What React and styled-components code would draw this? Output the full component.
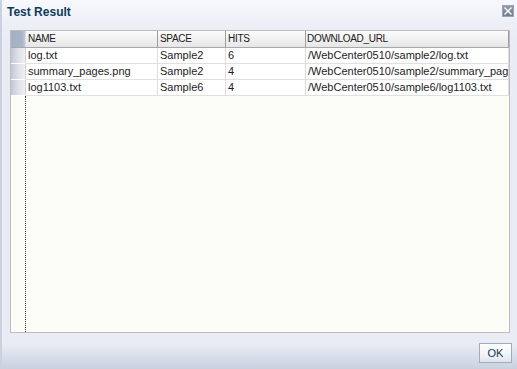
import React from "react";
import styled, { createGlobalStyle } from "styled-components";

const Global = createGlobalStyle`
  html, body { margin: 0; padding: 0; width: 517px; height: 369px; overflow: hidden; }
  body { font-family: "Liberation Sans", Arial, sans-serif; }
  * { box-sizing: border-box; }
`;

const Dialog = styled.div`
  width: 517px;
  height: 369px;
  display: flex;
  flex-direction: column;
  border-left: 2px solid #cbd1de;
  background: linear-gradient(
    to bottom,
    #f8f9fc 0px,
    #eceff6 24px,
    #e9ecf5 40px,
    #e9ecf5 344px,
    #c9d1df 369px
  );
`;

const TitleBar = styled.div`
  height: 30px;
  flex: none;
  display: flex;
  justify-content: space-between;
  align-items: flex-start;
  padding: 5px 3px 0 5px;
`;

const Title = styled.div`
  font-size: 12px;
  line-height: 14px;
  font-weight: bold;
  color: #0f3b5b;
`;

const CloseButton = styled.button`
  width: 12px;
  height: 12px;
  padding: 0;
  border: 1px solid #9aa5b8;
  background: linear-gradient(to bottom, #8c98ad, #6f7d95);
  display: flex;
  align-items: center;
  justify-content: center;
  cursor: pointer;
`;

const TableBox = styled.div`
  margin-left: 8px;
  width: 500px;
  height: 303px;
  flex: none;
  border: 1px solid #bcbcbc;
  background: #fcfdf6;
  display: flex;
  flex-direction: column;
  font-size: 11px;
  color: #1c1c1c;
`;

const COLS = "15px 132px 68px 80px 203px";

const HeaderRow = styled.div`
  display: grid;
  grid-template-columns: ${COLS};
  height: 17px;
  flex: none;
  background: linear-gradient(to bottom, #fcfcfc, #e6e6e6);
  border-bottom: 1px solid #a8a8a8;
`;

const HeaderCell = styled.div`
  border-right: 1px solid #9c9c9c;
  padding-left: ${(p) => p.$pad ?? 2}px;
  font-size: 10px;
  letter-spacing: -0.3px;
  line-height: 16px;
  color: #202020;
  white-space: nowrap;
  overflow: hidden;
`;

const CornerCell = styled.div`
  background: linear-gradient(to right, #a3b0c4 0, #a8b4c7 80%, #c3cbd8 100%);
  border-right: 1px solid #d8dde6;
`;

const Row = styled.div`
  display: grid;
  grid-template-columns: ${COLS};
  height: 16px;
  flex: none;
`;

const RowHead = styled.div`
  background: linear-gradient(to right, #c3c8d4 0, #dde0e8 50%, #eff0f4 100%);
  border-bottom: 1px solid #ffffff;
  border-right: 1px solid #d2d2d2;
`;

const Cell = styled.div`
  background: #ffffff;
  border-right: 1px solid #dcdcdc;
  border-bottom: 1px solid #e0e0e0;
  padding-left: 2px;
  line-height: 15px;
  white-space: nowrap;
  overflow: hidden;
`;

const Filler = styled.div`
  flex: 1;
  display: grid;
  grid-template-columns: 15px 1fr;
`;

const DottedGuide = styled.div`
  border-right: 1px dotted #3a3a3a;
`;

const Footer = styled.div`
  flex: none;
  display: flex;
  justify-content: flex-end;
  padding: 10px 5px 0 0;
`;

const OkButton = styled.button`
  width: 33px;
  height: 20px;
  padding: 0;
  border: 1px solid #a3abb9;
  background: linear-gradient(to bottom, #ffffff 0, #f3f5f9 50%, #dfe4ee 100%);
  color: #0f3b5b;
  font-family: "Liberation Sans", Arial, sans-serif;
  font-size: 11px;
  line-height: 18px;
  cursor: pointer;
`;

const rows = [
  ["log.txt", "Sample2", "6", "/WebCenter0510/sample2/log.txt"],
  ["summary_pages.png", "Sample2", "4", "/WebCenter0510/sample2/summary_pages.png"],
  ["log1103.txt", "Sample6", "4", "/WebCenter0510/sample6/log1103.txt"],
];

export default function App() {
  return (
    <>
      <Global />
      <Dialog>
        <TitleBar>
          <Title>Test Result</Title>
          <CloseButton aria-label="Close">
            <svg width="8" height="8" viewBox="0 0 8 8">
              <path d="M0.5 0.5 L7.5 7.5 M7.5 0.5 L0.5 7.5" stroke="#ffffff" strokeWidth="1.4" />
            </svg>
          </CloseButton>
        </TitleBar>
        <TableBox>
          <HeaderRow>
            <CornerCell />
            <HeaderCell>NAME</HeaderCell>
            <HeaderCell>SPACE</HeaderCell>
            <HeaderCell>HITS</HeaderCell>
            <HeaderCell $pad={1}>DOWNLOAD_URL</HeaderCell>
          </HeaderRow>
          {rows.map((r, i) => (
            <Row key={i}>
              <RowHead />
              {r.map((c, j) => (
                <Cell key={j}>{c}</Cell>
              ))}
            </Row>
          ))}
          <Filler>
            <DottedGuide />
            <div />
          </Filler>
        </TableBox>
        <Footer>
          <OkButton>OK</OkButton>
        </Footer>
      </Dialog>
    </>
  );
}
